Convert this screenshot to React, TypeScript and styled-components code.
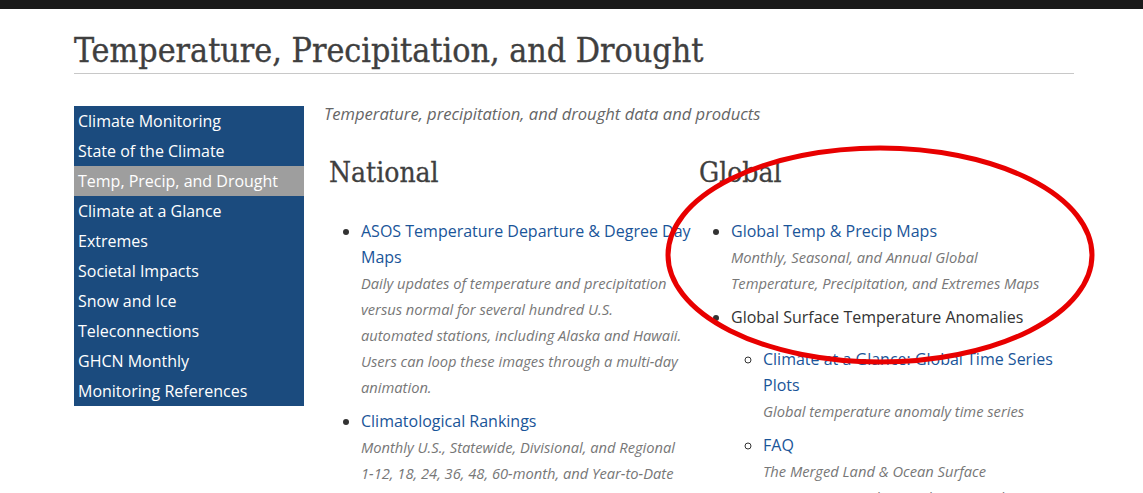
import React, { FC } from 'react';
import styled, { createGlobalStyle } from 'styled-components';

const GlobalStyle = createGlobalStyle`
  html, body {
    margin: 0;
    padding: 0;
    background: #fff;
    overflow: hidden;
  }
  body {
    font-family: "Open Sans", "DejaVu Sans", sans-serif;
    color: #333;
  }
`;

const Page = styled.div`
  position: relative;
  width: 1143px;
  height: 493px;
  overflow: hidden;
`;

const TopBar = styled.div`
  height: 9px;
  background: #1a1a1a;
`;

const Container = styled.div`
  width: 1000px;
  margin-left: 74px;
`;

const Title = styled.h1`
  margin: 0;
  padding-top: 20px;
  font-family: "DejaVu Serif Condensed", "DejaVu Serif", serif;
  font-stretch: condensed;
  font-weight: normal;
  font-size: 33.7px;
  line-height: 44px;
  color: #3f3f3f;
  -webkit-text-stroke: 0.35px #3f3f3f;
  border-bottom: 1px solid #c8c8c8;
`;

const Main = styled.div`
  display: flex;
  margin-top: 28px;
`;

const Sidebar = styled.ul`
  list-style: none;
  margin: 4px 0 0;
  padding: 0;
  width: 230px;
  background: #1b4b7e;
  align-self: flex-start;
`;

const SideItem = styled.li<{ $active?: boolean }>`
  height: 30px;
  line-height: 30px;
  padding-left: 4px;
  font-size: 16px;
  color: #fff;
  background: ${p => (p.$active ? '#9e9e9e' : 'transparent')};
  white-space: nowrap;
`;

const Content = styled.div`
  margin-left: 20px;
  flex: 1;
`;

const Tagline = styled.p`
  margin: 0;
  font-style: italic;
  font-size: 16.6px;
  line-height: 24px;
  color: #666;
`;

const Columns = styled.div`
  display: grid;
  grid-template-columns: 370px 370px;
  padding-left: 5px;
  margin-top: 29px;
`;

const Heading = styled.h2`
  margin: 0 0 27px;
  font-family: "DejaVu Serif Condensed", "DejaVu Serif", serif;
  font-stretch: condensed;
  font-weight: normal;
  font-size: 28px;
  line-height: 36px;
  color: #3f3f3f;
  -webkit-text-stroke: 0.3px #3f3f3f;
`;

const List = styled.ul<{ $sub?: boolean }>`
  margin: ${p => (p.$sub ? '16px 0 0' : '0')};
  padding-left: 32px;
  list-style: ${p => (p.$sub ? 'circle' : 'disc')};
`;

const Item = styled.li`
  font-size: 16px;
  line-height: 26px;
  margin-bottom: 8px;
  color: #333;

  &::marker {
    color: #333;
  }
`;

const Link = styled.a`
  color: #1a5599;
  text-decoration: none;
`;

const Desc = styled.div`
  padding-right: 15px;
  font-style: italic;
  font-size: 14.7px;
  line-height: 26px;
  color: #777;
`;

const Overlay = styled.svg`
  position: absolute;
  top: 0;
  left: 0;
  pointer-events: none;
`;

const sideLinks = [
  'Climate Monitoring',
  'State of the Climate',
  'Temp, Precip, and Drought',
  'Climate at a Glance',
  'Extremes',
  'Societal Impacts',
  'Snow and Ice',
  'Teleconnections',
  'GHCN Monthly',
  'Monitoring References',
];

const App: FC = () => (
  <>
    <GlobalStyle />
    <Page>
      <TopBar />
      <Container>
        <Title>Temperature, Precipitation, and Drought</Title>
        <Main>
          <Sidebar>
            {sideLinks.map(s => (
              <SideItem key={s} $active={s === 'Temp, Precip, and Drought'}>
                {s}
              </SideItem>
            ))}
          </Sidebar>
          <Content>
            <Tagline>Temperature, precipitation, and drought data and products</Tagline>
            <Columns>
              <div>
                <Heading>National</Heading>
                <List>
                  <Item>
                    <Link href="#">ASOS Temperature Departure &amp; Degree Day Maps</Link>
                    <Desc>
                      Daily updates of temperature and precipitation versus normal for several
                      hundred U.S. automated stations, including Alaska and Hawaii. Users can loop
                      these images through a multi-day animation.
                    </Desc>
                  </Item>
                  <Item>
                    <Link href="#">Climatological Rankings</Link>
                    <Desc>
                      Monthly U.S., Statewide, Divisional, and Regional 1-12, 18, 24, 36, 48,
                      60-month, and Year-to-Date rankings
                    </Desc>
                  </Item>
                </List>
              </div>
              <div>
                <Heading>Global</Heading>
                <List>
                  <Item>
                    <Link href="#">Global Temp &amp; Precip Maps</Link>
                    <Desc>
                      Monthly, Seasonal, and Annual Global Temperature, Precipitation, and
                      Extremes Maps
                    </Desc>
                  </Item>
                  <Item>
                    Global Surface Temperature Anomalies
                    <List $sub>
                      <Item>
                        <Link href="#">Climate at a Glance: Global Time Series Plots</Link>
                        <Desc>Global temperature anomaly time series</Desc>
                      </Item>
                      <Item>
                        <Link href="#">FAQ</Link>
                        <Desc>
                          The Merged Land &amp; Ocean Surface Temperature analysis and its
                          anomalies explained
                        </Desc>
                      </Item>
                    </List>
                  </Item>
                </List>
              </div>
            </Columns>
          </Content>
        </Main>
      </Container>
      <Overlay width="1143" height="493" viewBox="0 0 1143 493">
        <ellipse cx="880" cy="255" rx="212" ry="107" fill="none" stroke="#e80000" strokeWidth="5" />
      </Overlay>
    </Page>
  </>
);

export default App;
